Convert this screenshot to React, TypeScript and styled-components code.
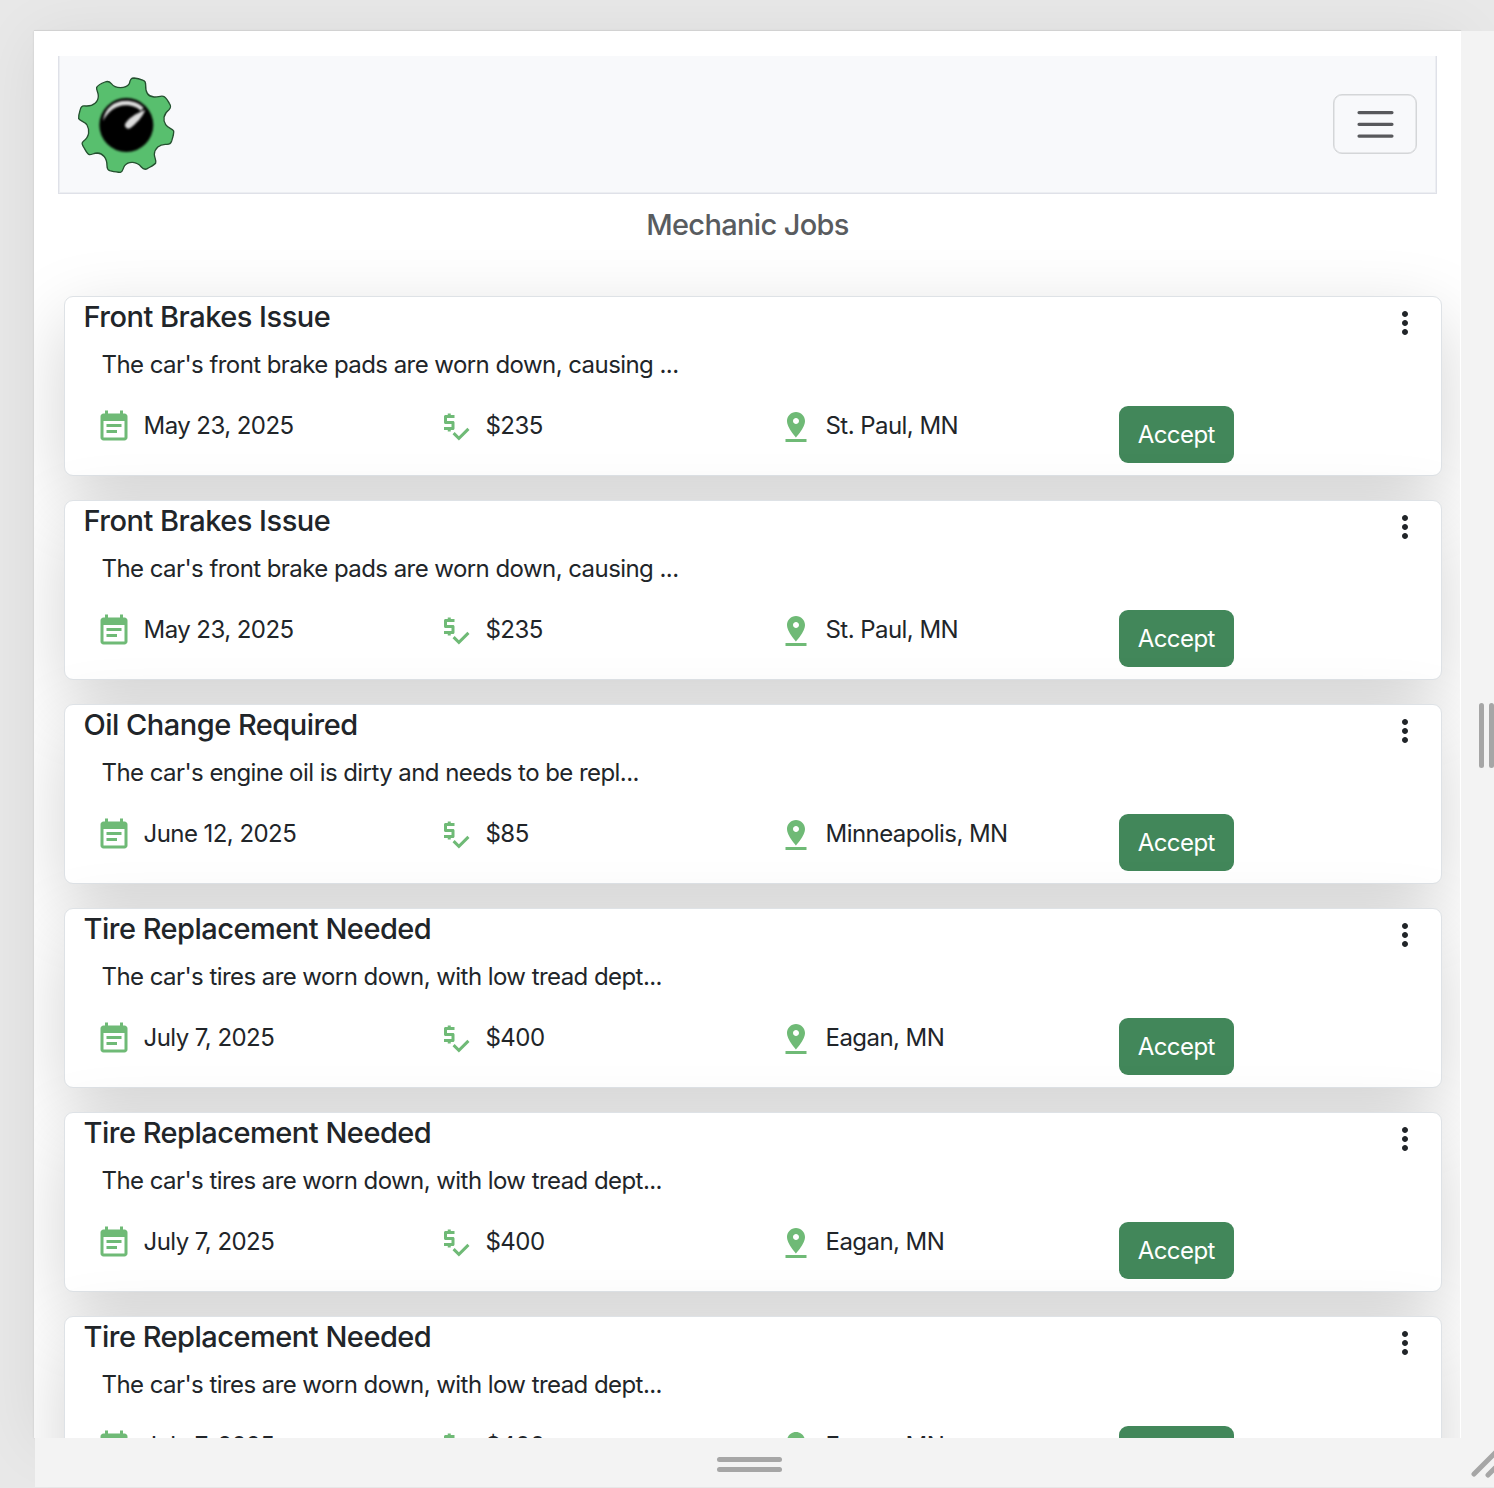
import React from 'react';
import styled, { createGlobalStyle } from 'styled-components';

const GlobalStyle = createGlobalStyle`
  *, *::before, *::after { box-sizing: border-box; }
  html, body { margin: 0; padding: 0; overflow: hidden; }
  body {
    background: #e8e8e8;
    color: #212529;
    font-family: Inter, "Liberation Sans", sans-serif;
    font-size: 24px;
    line-height: 36px;
  }
`;

const Stage = styled.div`
  display: grid;
  grid-template-columns: 34px 1427px 33px;
  grid-template-rows: 31px 1407px 49px;
  width: 1494px;
  height: 1488px;
  overflow: hidden;
  background: #e8e8e8;
`;

const Viewport = styled.main`
  grid-column: 2;
  grid-row: 2;
  padding-right: 1px;
  background: #fff;
  box-shadow: 0 -1px 0 #d2d2d2, 0 0 2px rgba(0, 0, 0, 0.12), 0 6px 60px rgba(0, 0, 0, 0.07);
`;

const Page = styled.div`
  height: 100%;
  overflow: hidden;
  padding: 25px 18px 0 24px;
`;

const SideHandle = styled.div`
  grid-column: 3;
  grid-row: 2;
  position: relative;
  display: flex;
  gap: 5px;
  padding: 672px 0 0 18px;
  background: #f3f3f3;
`;

const BottomHandle = styled.div`
  grid-column: 2 / 4;
  grid-row: 3;
  position: relative;
  display: flex;
  flex-direction: column;
  gap: 5px;
  margin-left: 1px;
  padding: 19px 0 0 682px;
  background: #f3f3f3;
`;

const Grip = styled.span<{ $vertical?: boolean }>`
  flex: none;
  width: ${(p) => (p.$vertical ? '5px' : '65px')};
  height: ${(p) => (p.$vertical ? '65px' : '5px')};
  border-radius: 3px;
  background: #a6a6a6;
`;

const CornerGrip = styled.svg`
  position: absolute;
  right: 0;
  top: 8px;
`;

const Navbar = styled.header`
  display: flex;
  align-items: center;
  justify-content: space-between;
  width: 1379px;
  height: 138px;
  padding: 0 19px 0 16px;
  border: solid #dfe1e8;
  border-width: 0 1px 1px;
  background: #f8f9fb;
  box-shadow: inset 1px 0 #eceef2, inset -1px -1px #eceef2;
`;

const Toggler = styled.button`
  display: grid;
  place-items: center;
  width: 84px;
  height: 60px;
  margin-bottom: 1px;
  padding: 0;
  border: 1px solid #d4d6d8;
  border-radius: 9px;
  background: transparent;
  box-shadow: inset 0 0 0 0.5px #d4d6d8;
`;

const PageTitle = styled.h1`
  width: 1379px;
  margin: 13px 0 53px;
  font-size: 29px;
  font-weight: 500;
  line-height: 36px;
  letter-spacing: -0.65px;
  text-align: center;
  color: #595c5f;
`;

const JobList = styled.section`
  display: flex;
  flex-direction: column;
  gap: 24px;
  padding-left: 6px;
`;

const Card = styled.article`
  flex: none;
  width: 1378px;
  height: 180px;
  padding: 2px 18px 0 18.5px;
  border: 1px solid #dee2e6;
  border-radius: 9px;
  background: #fff;
  box-shadow: 0 24px 72px rgba(0, 0, 0, 0.175);
`;

const CardHeader = styled.div`
  display: flex;
  justify-content: space-between;
  height: 36px;
`;

const JobTitle = styled.h2`
  margin: 0;
  font-size: 29px;
  font-weight: 500;
  line-height: 36px;
  letter-spacing: -0.5px;
`;

const MenuButton = styled.button`
  display: flex;
  width: 36px;
  height: 36px;
  margin-top: 6px;
  padding: 0;
  border: 0;
  background: none;
  color: #212529;
`;

const Description = styled.p`
  margin: 12px 0 0 18px;
  letter-spacing: -0.56px;
`;

const Details = styled.div`
  display: grid;
  grid-template-columns: 342px 340px 341px 1fr;
  margin: 22.5px 0 0 12px;
  letter-spacing: -0.55px;
`;

const Detail = styled.div`
  display: flex;
  gap: 12px;
  height: 38px;
  padding-top: 2px;
  svg { flex: none; margin-top: 1px; color: #6fba76; }
`;

const AcceptButton = styled.button`
  width: 115.5px;
  height: 57px;
  padding: 2px 0 0;
  border: 0;
  border-radius: 9px;
  background: #42875a;
  color: #fff;
  font: inherit;
  letter-spacing: inherit;
`;

const Svg = ({ d }: { d: string }) => (
  <svg width="36" height="36" viewBox="0 0 24 24" fill="currentColor">
    <path d={d} />
  </svg>
);

const CALENDAR =
  'M17 10H7v2h10v-2zm2-7h-1V1h-2v2H8V1H6v2H5c-1.11 0-1.99.9-1.99 2L3 19c0 1.1.89 2 2 2h14c1.1 0 2-.9 2-2V5c0-1.1-.9-2-2-2zm0 16H5V8h14v11zm-5-5H7v2h7v-2z';
const PRICE =
  'M11 13V9c0-.55-.45-1-1-1H6V6h5V4H8.5V3h-2v1H5c-.55 0-1 .45-1 1v4c0 .55.45 1 1 1h4v2H4v2h2.5v1h2v-1H10c.55 0 1-.45 1-1zM19.59 12.52l-5.66 5.65-2.83-2.83-1.41 1.42L13.93 21 21 13.93z';
const PIN =
  'M18 8c0-3.31-2.69-6-6-6S6 4.69 6 8c0 4.5 6 11 6 11s6-6.5 6-11zm-8 0c0-1.1.9-2 2-2s2 .9 2 2-.89 2-2 2c-1.1 0-2-.9-2-2zM5 20v2h14v-2H5z';
const DOTS =
  'M12 8c1.1 0 2-.9 2-2s-.9-2-2-2-2 .9-2 2 .9 2 2 2zm0 2c-1.1 0-2 .9-2 2s.9 2 2 2 2-.9 2-2-.9-2-2-2zm0 6c-1.1 0-2 .9-2 2s.9 2 2 2 2-.9 2-2-.9-2-2-2z';

const Logo = () => (
  <svg width="102" height="102" viewBox="225 223 306 306">
    <defs>
      <filter id="soft" x="-10%" y="-10%" width="120%" height="120%">
        <feGaussianBlur stdDeviation="2.5" />
      </filter>
    </defs>
    <path
      d="M388 252C391 238 394 235 402 235C412 236 422 239 430 242C436 244 437 248 437 256C436 280 446 291 462 292C474 293 480 288 490 290C498 292 503 303 508 311C514 320 513 324 507 330C490 343 488 361 497 375C504 386 517 386 521 394C522 403 518 414 515 424C512 433 507 435 498 434C478 433 464 447 463 464C463 475 470 482 467 490C462 497 450 502 442 507C434 511 429 508 424 502C410 485 386 484 374 498C368 506 370 516 361 518C350 518 338 515 329 513C322 510 321 506 321 498C321 474 308 461 292 460C280 460 276 466 268 465C260 462 256 450 250 441C245 432 245 429 251 424C268 411 270 392 261 376C254 365 240 364 236 357C235 346 239 336 242 326C245 318 249 318 258 319C281 320 295 306 295 289C295 278 288 270 290 263C294 256 307 250 315 247C325 243 329 246 334 252C346 268 377 268 388 252Z"
      fill="#58bf6e"
      stroke="#24502f"
      strokeWidth="4"
    />
    <circle cx="379" cy="376" r="81" fill="#000" filter="url(#soft)" />
    <g fill="#dcdcdc" filter="url(#soft)">
      <path d="M309 364C314 326 341 303 377 303C399 303 418 310 431 325L422 333C409 321 394 317 377 317C347 318 325 335 309 364Z" />
      <path d="M436 331C426 354 409 371 390 386C381 390 373 382 375 374C383 358 406 341 436 331Z" />
    </g>
  </svg>
);

interface Job {
  title: string;
  text: string;
  date: string;
  price: string;
  place: string;
}

const brakes: Job = {
  title: 'Front Brakes Issue',
  text: "The car's front brake pads are worn down, causing ...",
  date: 'May 23, 2025',
  price: '$235',
  place: 'St. Paul, MN',
};
const oil: Job = {
  title: 'Oil Change Required',
  text: "The car's engine oil is dirty and needs to be repl...",
  date: 'June 12, 2025',
  price: '$85',
  place: 'Minneapolis, MN',
};
const tires: Job = {
  title: 'Tire Replacement Needed',
  text: "The car's tires are worn down, with low tread dept...",
  date: 'July 7, 2025',
  price: '$400',
  place: 'Eagan, MN',
};
const jobs = [brakes, brakes, oil, tires, tires, tires];

const JobCard = ({ job }: { job: Job }) => (
  <Card>
    <CardHeader>
      <JobTitle>{job.title}</JobTitle>
      <MenuButton aria-label="More"><Svg d={DOTS} /></MenuButton>
    </CardHeader>
    <Description>{job.text}</Description>
    <Details>
      <Detail><Svg d={CALENDAR} />{job.date}</Detail>
      <Detail><Svg d={PRICE} />{job.price}</Detail>
      <Detail><Svg d={PIN} />{job.place}</Detail>
      <AcceptButton>Accept</AcceptButton>
    </Details>
  </Card>
);

export default function App() {
  return (
    <>
      <GlobalStyle />
      <Stage>
        <Viewport>
          <Page>
            <Navbar>
              <Logo />
              <Toggler aria-label="Menu">
                <svg width="45" height="45" viewBox="0 0 30 30">
                  <path
                    d="M4 7h22M4 15h22M4 23h22"
                    stroke="#58595c"
                    strokeWidth="2.1"
                    strokeLinecap="round"
                    transform="translate(0 .2) scale(1 .98)"
                  />
                </svg>
              </Toggler>
            </Navbar>
            <PageTitle>Mechanic Jobs</PageTitle>
            <JobList>
              {jobs.map((job, i) => <JobCard key={i} job={job} />)}
            </JobList>
          </Page>
        </Viewport>
        <SideHandle>
          <Grip $vertical />
          <Grip $vertical />
        </SideHandle>
        <BottomHandle>
          <Grip />
          <Grip />
          <CornerGrip width="26" height="34" viewBox="0 0 26 34" stroke="#a6a6a6" strokeWidth="5" strokeLinecap="round">
            <path d="M6 28L30 4M20 29L34 15" />
          </CornerGrip>
        </BottomHandle>
      </Stage>
    </>
  );
}
